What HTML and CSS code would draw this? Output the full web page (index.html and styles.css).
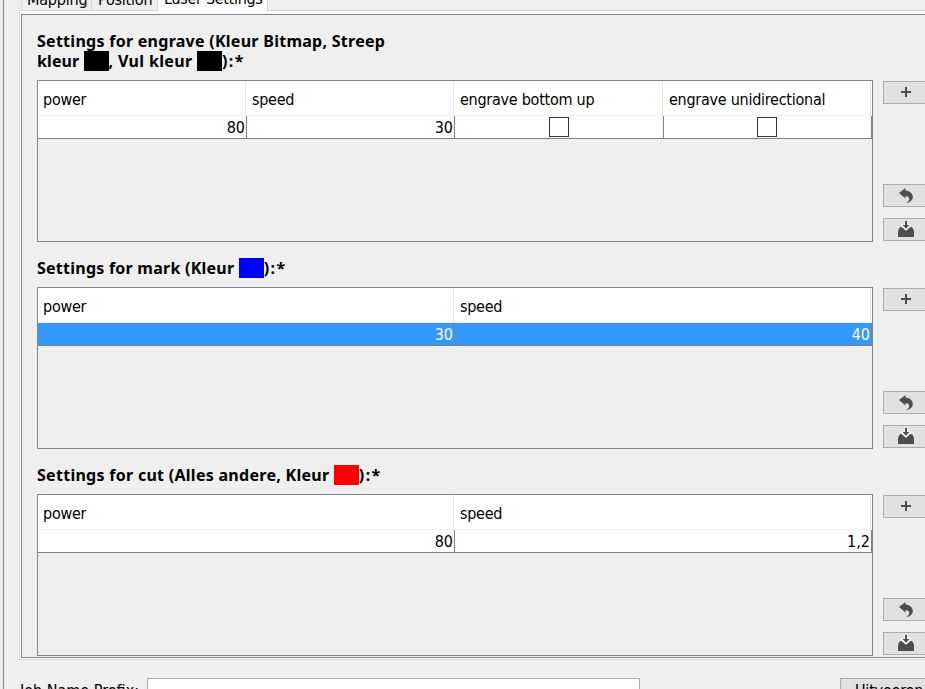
FILE: index.html
```
<!DOCTYPE html>
<html lang="nl">
<head>
<meta charset="utf-8">
<title>Laser Settings</title>
<link rel="stylesheet" href="styles.css">
</head>
<body>
<svg width="0" height="0" class="defs" aria-hidden="true">
  <symbol id="plus" viewBox="0 0 18 18"><path d="M8 4h2v4h4v2h-4v4H8v-4H4V8h4z" fill="#4d4d4d"/></symbol>
  <symbol id="undo" viewBox="0 0 18 18"><path d="M2 7 8.500 2v2.500C13 5 15.800 7.500 15.800 11c0 3.200-2.800 5.500-7 6.200 2.600-1.400 3.700-3 3.400-4.700-.3-1.500-1.600-2.300-3.700-2.500V12.500z" fill="#4d4d4d"/></symbol>
  <symbol id="save" viewBox="0 0 18 18"><path d="M1 17v-5C1 9.500 2.500 7 4.500 6.500h9C15.500 7 17 9.500 17 12v5z" fill="#4d4d4d"/><path d="M4 4l3 1V2h4v3l3-1v2.500L9 10.800 4 6.500z" fill="#fff"/><path d="M8 1h2v4h2.500L9 8.800 5.500 5H8z" fill="#4d4d4d"/></symbol>
</svg>
<div class="window">
  <nav class="tabs">
    <div class="tab mapping"><span>Mapping</span></div>
    <div class="tab position"><span>Position</span></div>
    <div class="tab active"><span>Laser Settings</span></div>
  </nav>
  <main class="pane">
    <div class="pane-body">
      <section class="profile engrave">
        <h2><span>Settings for engrave (Kleur Bitmap, Streep</span><br><span class="tight">kleur </span><i class="swatch black"></i><span class="vul">, Vul kleur </span><i class="swatch black"></i><span class="end">):*</span></h2>
        <div class="row">
          <div class="table four">
            <div class="th">power</div><div class="th">speed</div><div class="th">engrave bottom up</div><div class="th">engrave unidirectional</div>
            <div class="td">80</div><div class="td">30</div><div class="td check"><b></b></div><div class="td check"><b></b></div>
          </div>
          <div class="buttons">
            <button><svg><use href="#plus"/></svg></button>
            <button class="undo"><svg><use href="#undo"/></svg></button>
            <button><svg><use href="#save"/></svg></button>
          </div>
        </div>
      </section>
      <section class="profile">
        <h2><span class="mark">Settings for mark (Kleur </span><i class="swatch blue"></i><span class="end">):*</span></h2>
        <div class="row">
          <div class="table two">
            <div class="th">power</div><div class="th">speed</div>
            <div class="td selected">30</div><div class="td selected">40</div>
          </div>
          <div class="buttons">
            <button><svg><use href="#plus"/></svg></button>
            <button class="undo"><svg><use href="#undo"/></svg></button>
            <button><svg><use href="#save"/></svg></button>
          </div>
        </div>
      </section>
      <section class="profile">
        <h2><span class="cut">Settings for cut (Alles andere, Kleur </span><i class="swatch red"></i><span class="end">):*</span></h2>
        <div class="row">
          <div class="table two">
            <div class="th">power</div><div class="th">speed</div>
            <div class="td">80</div><div class="td">1,2</div>
          </div>
          <div class="buttons">
            <button><svg><use href="#plus"/></svg></button>
            <button class="undo"><svg><use href="#undo"/></svg></button>
            <button><svg><use href="#save"/></svg></button>
          </div>
        </div>
      </section>
    </div>
  </main>
  <footer class="job">
    <label>Job Name Prefix:</label>
    <div class="input"></div>
    <button class="run">Uitvoeren</button>
  </footer>
</div>
</body>
</html>
```
FILE: styles.css
```
* { box-sizing: border-box; }
html, body { height: 100%; }
body {
  margin: 0;
  overflow: hidden;
  background: #efefef;
  color: #000;
  font: 16px/20px "DejaVu Sans Condensed", "Noto Sans", sans-serif;
}
.defs { display: block; }
.window {
  height: 689px;
  margin-left: 3px;
  padding-left: 15px;
  border-left: 1px solid #828790;
  overflow: hidden;
  white-space: nowrap;
}
.tabs { display: flex; height: 11px; padding-left: 2px; border-bottom: 1px solid #d9d9d9; }
.tab { display: flex; flex: none; align-items: flex-end; height: 10px; border-right: 1px solid #d9d9d9; letter-spacing: -.2px; }
.tab span { display: block; height: 20px; }
.mapping { width: 71px; padding-left: 5px; border-left: 1px solid #d9d9d9; }
.position { width: 66px; padding-left: 6px; }
.active { width: 110px; height: 12px; padding: 0 0 3px 6px; background: #fff; letter-spacing: -.3px; }
.pane {
  height: 649px;
  border: solid #d9d9d9;
  border-width: 0 0 1px 1px;
  background: #fff;
  padding: 3px 0 1px 1px;
}
.pane-body {
  height: 644px;
  padding: 16px 0 0 15px;
  border: solid #828790;
  border-width: 1px 0 1px 1px;
  background: #efefef;
}
.profile h2 {
  height: 29px;
  margin: 0;
  font: 700 16px/20px "Noto Sans", sans-serif;
  letter-spacing: .27px;
  white-space: pre;
}
.profile.engrave h2 { height: 49px; }
.tight { letter-spacing: .1px; }
.vul { letter-spacing: .35px; }
.mark { letter-spacing: .24px; }
.cut { letter-spacing: .28px; }
.end { letter-spacing: 1.4px; }
.profile { margin-bottom: 16px; }
.swatch { display: inline-block; width: 25px; height: 20px; vertical-align: top; }
.black { background: #000; }
.blue { background: #00f; }
.red { background: #f00; }
.row { display: flex; height: 162px; gap: 10px; }
.table {
  display: grid;
  grid-template-rows: 35px 23px;
  flex: none;
  width: 836px;
  border: 1px solid #828790;
  align-content: start;
}
.four { grid-template-columns: 209px 208px 209px 208px; }
.two { grid-template-columns: 417px 417px; }
.th {
  padding: 9px 0 0 5px;
  background: linear-gradient(#e5e5e5, #e5e5e5) calc(100% - 1px) 0 / 1px 34px no-repeat, #fff;
  border-bottom: 1px solid #efefef;
  letter-spacing: -.26px;
}
.td {
  padding-right: 1px;
  background: #fff;
  border: solid #808080;
  border-width: 0 1px 1px 0;
  text-align: right;
  line-height: 24px;
}
.selected { background: #39f; color: #fff; }
.check { display: flex; justify-content: center; align-items: center; padding: 0 1px 0 0; }
.check b { width: 20px; height: 20px; border: 1px solid #333; background: #fff; }
.buttons { display: flex; flex-direction: column; gap: 11px; padding-top: 1px; flex: none; }
button { padding: 0; border: 1px solid #adadad; background: #e1e1e1; font: inherit; color: inherit; }
.buttons button { width: 47px; height: 23px; }
.buttons svg { display: block; width: 18px; height: 18px; margin: -1px 0 0 13px; }
.undo { margin-top: 69px; }
.job { display: flex; padding-top: 18px; }
.job label { flex: none; width: 128px; height: 24px; padding-left: 1px; line-height: 25px; }
.input { flex: none; width: 493px; height: 26px; border: 1px solid #adadad; background: #fff; }
.run { width: 104px; height: 26px; margin-left: 200px; padding: 0 0 0 14px; text-align: left; flex: none; letter-spacing: -.2px; }
```
